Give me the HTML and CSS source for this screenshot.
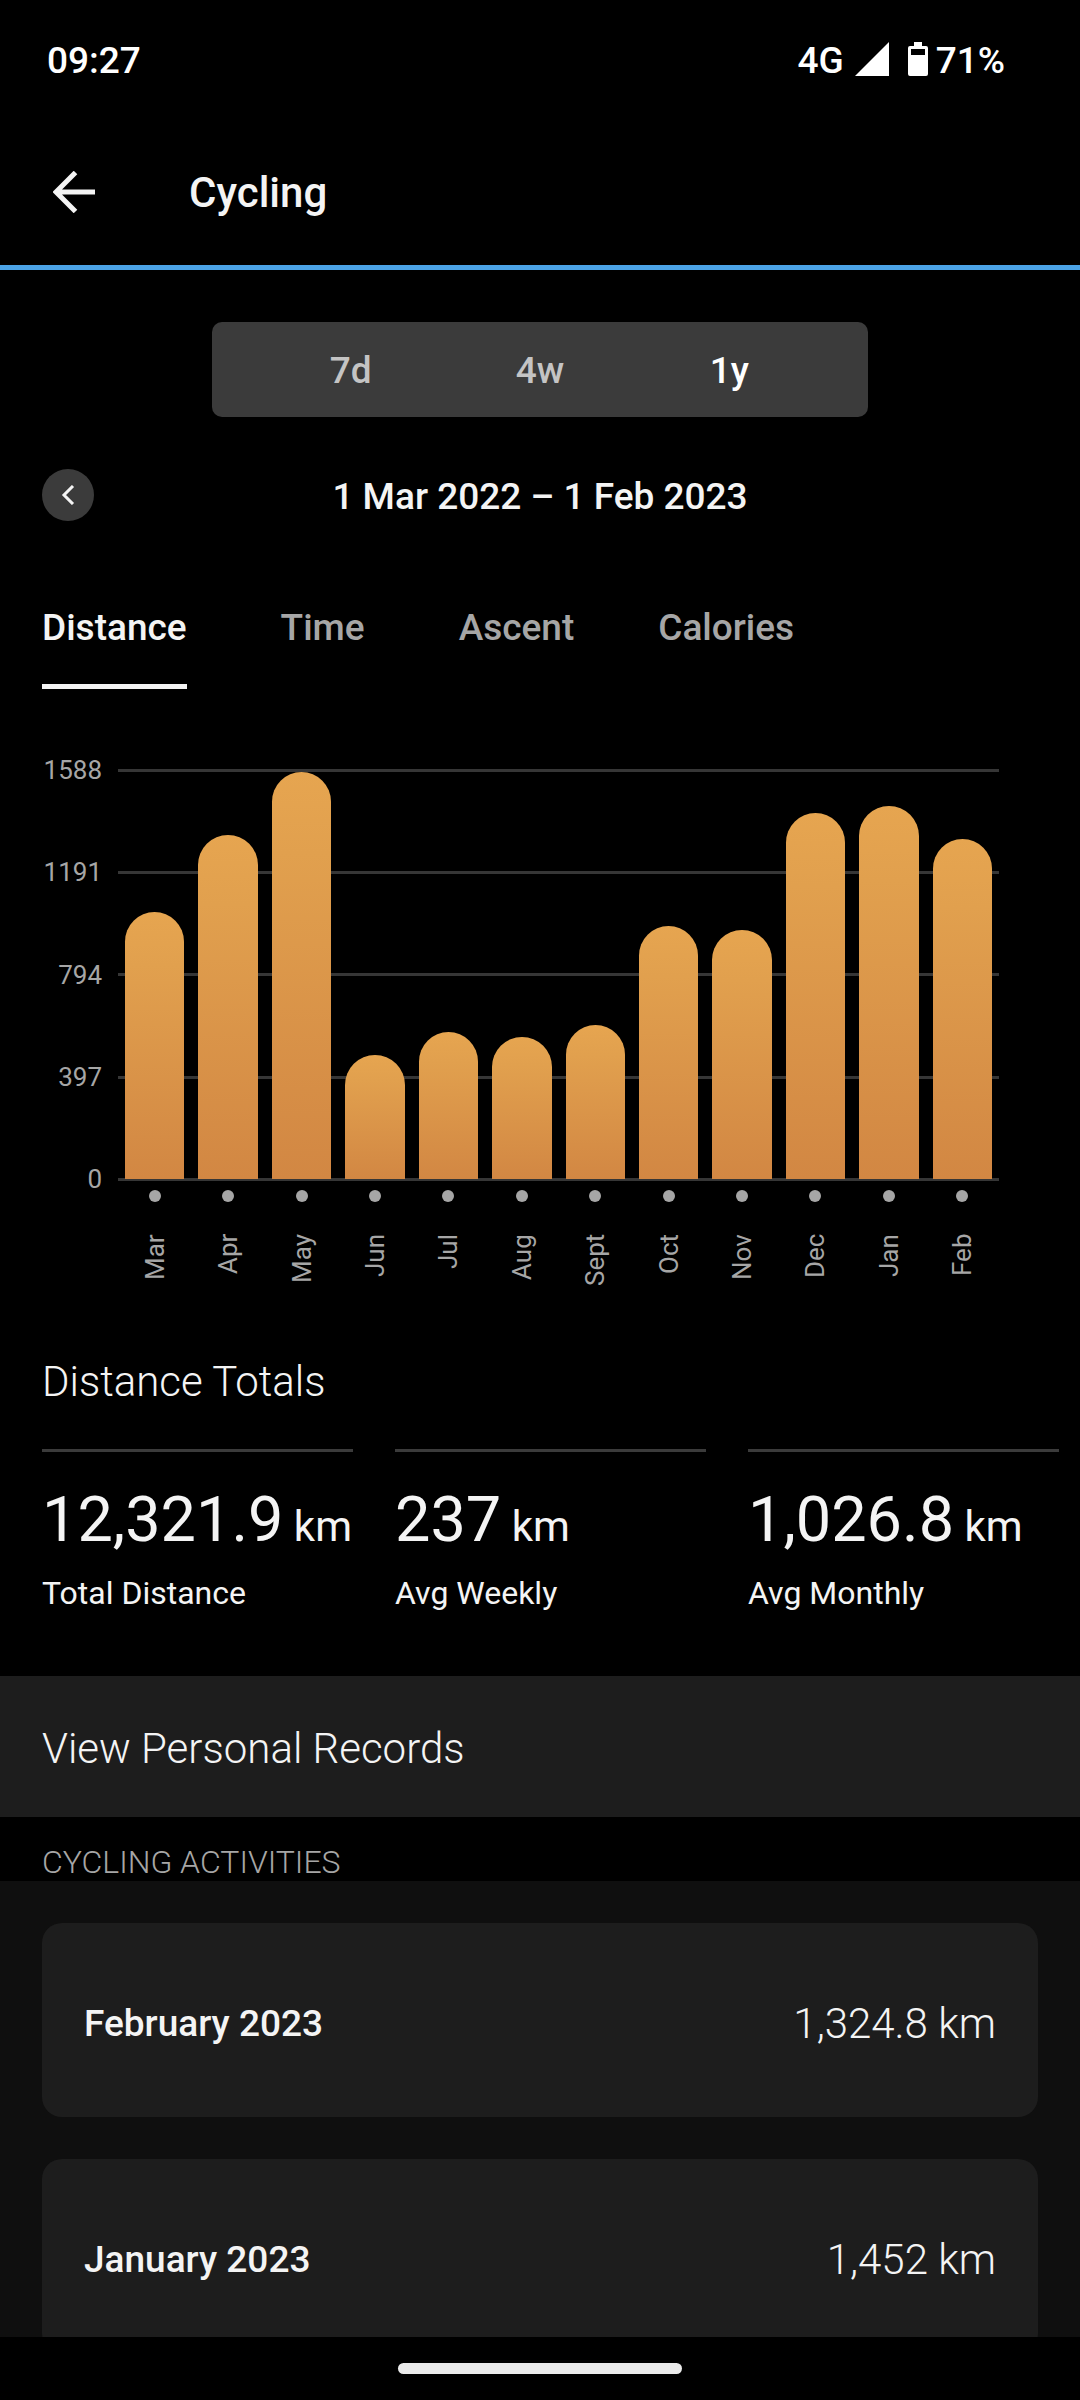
FILE: index.html
```html
<!DOCTYPE html>
<html lang="en">
<head>
<meta charset="utf-8">
<meta name="viewport" content="width=device-width, initial-scale=1">
<title>Cycling</title>
<link rel="stylesheet" href="styles.css">
</head>
<body class="app">
  <div class="status">
    <span class="status-text status-time">09:27</span>
    <span class="status-text">4G</span>
    <svg class="status-signal" width="34" height="34" viewBox="0 0 34 34" aria-hidden="true"><path d="M34 0v34H0z" fill="#fff"/></svg>
    <svg class="status-battery" width="20" height="34" viewBox="0 0 20 34" aria-hidden="true"><path fill="#fff" fill-rule="evenodd" d="M6 0h8v4h4a2 2 0 0 1 2 2v26a2 2 0 0 1-2 2H2a2 2 0 0 1-2-2V6a2 2 0 0 1 2-2h4zM3 7v6h14V7z"/></svg>
    <span class="status-text">71%</span>
  </div>

  <header class="topbar">
    <button class="icon-button" type="button" aria-label="Back">
      <svg width="42" height="42" viewBox="0 0 42 42" aria-hidden="true"><path d="M22.500 1.500L3 21l19.500 19.500M3.500 21H42" fill="none" stroke="#f4f4f4" stroke-width="5"/></svg>
    </button>
    <h1 class="topbar-title">Cycling</h1>
  </header>

  <main class="content">
    <div class="ranges" role="group" aria-label="Range">
      <button class="range" type="button" aria-pressed="false">7d</button>
      <button class="range" type="button" aria-pressed="false">4w</button>
      <button class="range" type="button" aria-pressed="true">1y</button>
    </div>

    <div class="period">
      <button class="period-prev" type="button" aria-label="Previous period">
        <svg width="14" height="20" viewBox="0 0 14 20" aria-hidden="true"><path d="M12 1L3 10l9 9" fill="none" stroke="#f4f4f4" stroke-width="3"/></svg>
      </button>
      <p class="period-text">1 Mar 2022 – 1 Feb 2023</p>
    </div>

    <div class="tabs" role="tablist">
      <button class="tab" type="button" role="tab" aria-selected="true">Distance</button>
      <button class="tab" type="button" role="tab" aria-selected="false">Time</button>
      <button class="tab" type="button" role="tab" aria-selected="false">Ascent</button>
      <button class="tab" type="button" role="tab" aria-selected="false">Calories</button>
    </div>

    <section class="chart" aria-label="Distance per month">
      <div class="axis">
        <span>1588</span><span>1191</span><span>794</span><span>397</span><span>0</span>
      </div>
      <div class="plot">
        <div class="bars">
          <div class="bar" style="height:65.400%"></div>
          <div class="bar" style="height:84.400%"></div>
          <div class="bar" style="height:99.800%"></div>
          <div class="bar" style="height:30.400%"></div>
          <div class="bar" style="height:36.000%"></div>
          <div class="bar" style="height:34.800%"></div>
          <div class="bar" style="height:37.700%"></div>
          <div class="bar" style="height:62.000%"></div>
          <div class="bar" style="height:61.000%"></div>
          <div class="bar" style="height:89.600%"></div>
          <div class="bar" style="height:91.500%"></div>
          <div class="bar" style="height:83.400%"></div>
        </div>
        <div class="months">
          <span class="month">Mar</span>
          <span class="month">Apr</span>
          <span class="month">May</span>
          <span class="month">Jun</span>
          <span class="month">Jul</span>
          <span class="month">Aug</span>
          <span class="month">Sept</span>
          <span class="month">Oct</span>
          <span class="month">Nov</span>
          <span class="month">Dec</span>
          <span class="month">Jan</span>
          <span class="month">Feb</span>
        </div>
      </div>
    </section>

    <h2 class="totals-title">Distance Totals</h2>
    <div class="totals">
      <div class="total">
        <p class="total-value">12,321.9<span class="unit"> km</span></p>
        <p class="total-label">Total Distance</p>
      </div>
      <div class="total">
        <p class="total-value">237<span class="unit"> km</span></p>
        <p class="total-label">Avg Weekly</p>
      </div>
      <div class="total">
        <p class="total-value">1,026.8<span class="unit"> km</span></p>
        <p class="total-label">Avg Monthly</p>
      </div>
    </div>

    <a class="records" href="#records">View Personal Records</a>

    <h2 class="list-title">CYCLING ACTIVITIES</h2>
    <div class="list">
      <a class="card" href="#2023-02"><span class="card-month">February 2023</span><span class="card-value">1,324.8 km</span></a>
      <a class="card" href="#2023-01"><span class="card-month">January 2023</span><span class="card-value">1,452 km</span></a>
    </div>
  </main>

  <div class="navbar"><div class="navbar-pill"></div></div>
</body>
</html>
```
FILE: styles.css
```css
* {
  box-sizing: border-box;
}

.app {
  display: flex;
  flex-direction: column;
  height: 100vh;
  margin: 0;
  background: #000;
  color: #f4f4f4;
  font-family: Roboto, sans-serif;
  font-size: 37px;
  line-height: 44px;
}

h1, h2, p {
  margin: 0;
  font-weight: inherit;
}

button {
  padding: 0;
  border: 0;
  background: none;
  color: inherit;
  font: inherit;
}

a {
  color: inherit;
  text-decoration: none;
}

svg {
  display: block;
}

/* System status bar */
.status {
  display: flex;
  flex: none;
  align-items: center;
  height: 118px;
  padding: 0 75px 0 47px;
  color: #fff;
  font-weight: 500;
}

.status-text {
  padding-top: 3px;
}

.status-time {
  margin-right: auto;
}

.status-signal {
  margin-left: 11px;
}

.status-battery {
  margin: 0 8px 0 19px;
}

/* Title bar */
.topbar {
  display: flex;
  flex: none;
  align-items: center;
  gap: 94px;
  height: 152px;
  padding: 0 53px;
  border-bottom: 5px solid #4ba3e6;
}

.topbar-title {
  padding-top: 3px;
  font-size: 42px;
  font-weight: 500;
}

.content {
  flex: 1;
  min-height: 0;
  overflow-y: auto;
  scrollbar-width: none;
}

/* Range switch */
.ranges {
  display: grid;
  grid-template-columns: repeat(3, 1fr);
  width: 656px;
  max-width: 100%;
  margin: 52px auto 0;
  padding: 0 44px;
  border-radius: 10px;
  background: #3b3b3b;
}

.range {
  height: 95px;
  padding-top: 3px;
  color: #c4c4c4;
  font-weight: 500;
}

.range[aria-pressed="true"] {
  color: #fff;
}

.period {
  display: grid;
  grid-template-columns: 52px 1fr 52px;
  align-items: center;
  margin-top: 52px;
  padding: 0 42px;
}

.period-prev {
  display: grid;
  place-items: center;
  height: 52px;
  border-radius: 50%;
  background: #3b3b3b;
}

.period-text {
  padding-top: 3px;
  font-weight: 500;
  text-align: center;
}

/* Metric tabs */
.tabs {
  display: flex;
  gap: 84px;
  margin-top: 85px;
  padding: 0 42px;
}

.tab {
  min-width: 104px;
  padding-bottom: 34px;
  border-bottom: 5px solid transparent;
  color: #a6a6a6;
  font-weight: 500;
}

.tab[aria-selected="true"] {
  border-color: #f4f4f4;
  color: #f4f4f4;
}

/* Bar chart */
.chart {
  display: grid;
  grid-template-columns: 60px 1fr;
  gap: 16px;
  margin-top: 66px;
  padding: 0 81px 0 42px;
  color: #a6a6a6;
  font-size: 26px;
  line-height: 30px;
}

.axis {
  display: flex;
  flex-direction: column;
  justify-content: space-between;
  height: 439px;
  text-align: right;
}

.plot {
  padding-top: 14px;
}

.bars {
  display: grid;
  grid-template-columns: repeat(12, 1fr);
  gap: 14px;
  align-items: end;
  height: 412px;
  padding: 2px 7px 2px;
  background: repeating-linear-gradient(to bottom, #363636 0 3px, transparent 3px 25%) 0 0 / 100% 409px no-repeat, linear-gradient(#363636, #363636) 0 100% / 100% 3px no-repeat;
}

.bar {
  border-radius: 30px 30px 0 0;
  background: linear-gradient(#e6a550, #e1a04e 20%, #d28743);
}

.months {
  display: grid;
  grid-template-columns: repeat(12, 1fr);
  margin-top: 9px;
}

.month {
  display: flex;
  align-items: center;
  justify-content: flex-end;
  justify-self: center;
  height: 108px;
  writing-mode: vertical-rl;
  transform: rotate(180deg);
}

.month::after {
  width: 12px;
  height: 12px;
  margin-top: 32px;
  border-radius: 50%;
  background: #a6a6a6;
  content: "";
}

/* Totals */
.totals-title {
  margin: 62px 42px 0;
  font-size: 42px;
  font-weight: 300;
}

.totals {
  display: grid;
  grid-template-columns: repeat(3, 1fr);
  gap: 42px;
  margin-top: 45px;
  padding: 0 21px 0 42px;
}

.total {
  border-top: 3px solid #3b3b3b;
}

.total-value {
  margin-top: 31px;
  font-size: 63px;
  line-height: 74px;
  white-space: nowrap;
}

.unit {
  font-size: 42px;
}

.total-label {
  margin-top: 10px;
  font-size: 32px;
  line-height: 38px;
}

/* Records link and activity list */
.records {
  display: block;
  margin-top: 64px;
  padding: 51px 42px 46px;
  background: #1d1d1d;
  font-size: 42px;
  font-weight: 300;
}

.list-title {
  padding: 26px 42px 0;
  color: #a6a6a6;
  font-size: 32px;
  font-weight: 300;
  line-height: 38px;
}

.list {
  display: grid;
  gap: 42px;
  padding: 42px;
  background: #0f0f0f;
}

.card {
  display: flex;
  align-items: center;
  justify-content: space-between;
  height: 194px;
  padding: 7px 42px 0;
  border-radius: 20px;
  background: #1d1d1d;
}

.card-month {
  font-weight: 500;
}

.card-value {
  font-size: 42px;
  font-weight: 300;
}

/* System gesture bar */
.navbar {
  display: flex;
  flex: none;
  align-items: center;
  justify-content: center;
  height: 63px;
}

.navbar-pill {
  width: 284px;
  height: 11px;
  border-radius: 6px;
  background: #ebebeb;
}
```
